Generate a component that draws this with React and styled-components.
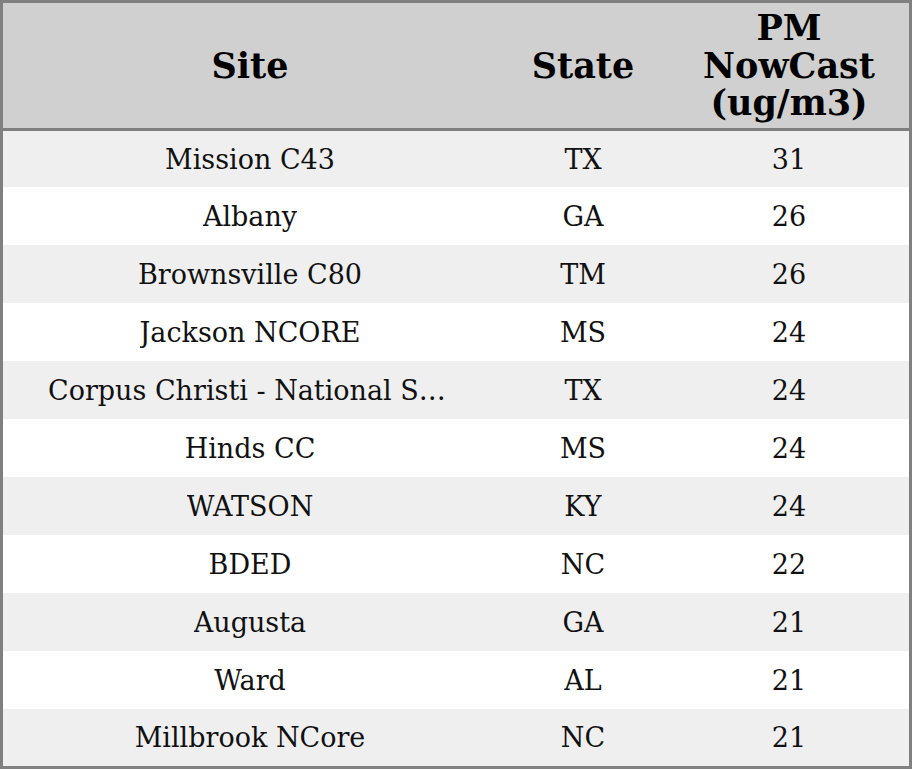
import React from "react";
import styled, { createGlobalStyle } from "styled-components";

const GlobalStyle = createGlobalStyle`
  html, body {
    margin: 0;
    padding: 0;
    background: #ffffff;
  }
  body {
    font-family: "DejaVu Serif", "Liberation Serif", serif;
  }
`;

const Table = styled.div`
  box-sizing: border-box;
  width: 912px;
  height: 769px;
  border: 3px solid #808080;
  display: flex;
  flex-direction: column;
  background: #ffffff;
  overflow: hidden;
`;

const HeaderRow = styled.div`
  display: grid;
  grid-template-columns: 494px 172px 240px;
  height: 125px;
  background: #d0d0d0;
  border-bottom: 3px solid #808080;
  flex-shrink: 0;
`;

const HeaderCell = styled.div`
  display: flex;
  align-items: center;
  justify-content: center;
  text-align: center;
  font-weight: 700;
  font-size: 35px;
  line-height: 37.5px;
  color: #000;
  padding: 0 4px;
`;

const Body = styled.div`
  flex: 1;
  display: flex;
  flex-direction: column;
`;

const Row = styled.div`
  flex: 0 0 58px;
  display: grid;
  grid-template-columns: 494px 172px 240px;
  background: ${(p) => (p.$odd ? "#efefef" : "#ffffff")};
  &:first-child {
    flex-basis: 56px;
  }
  &:last-child {
    flex: 1 1 auto;
  }
`;

const Cell = styled.div`
  display: flex;
  align-items: center;
  justify-content: center;
  font-size: 27px;
  color: #111;
  padding: 0 ${(p) => (p.$wide ? "45px" : "8px")};
  min-width: 0;
`;

const CellText = styled.span`
  white-space: nowrap;
  overflow: hidden;
  text-overflow: ellipsis;
  max-width: 100%;
`;

const rows = [
  ["Mission C43", "TX", 31],
  ["Albany", "GA", 26],
  ["Brownsville C80", "TM", 26],
  ["Jackson NCORE", "MS", 24],
  ["Corpus Christi - National Seashore", "TX", 24],
  ["Hinds CC", "MS", 24],
  ["WATSON", "KY", 24],
  ["BDED", "NC", 22],
  ["Augusta", "GA", 21],
  ["Ward", "AL", 21],
  ["Millbrook NCore", "NC", 21],
];

const App = () => {
  return (
    <>
      <GlobalStyle />
      <Table>
        <HeaderRow>
          <HeaderCell>Site</HeaderCell>
          <HeaderCell>State</HeaderCell>
          <HeaderCell>
            PM
            <br />
            NowCast
            <br />
            (ug/m3)
          </HeaderCell>
        </HeaderRow>
        <Body>
          {rows.map(([site, state, value], i) => (
            <Row key={site} $odd={i % 2 === 0}>
              <Cell $wide>
                <CellText>{site}</CellText>
              </Cell>
              <Cell>
                <CellText>{state}</CellText>
              </Cell>
              <Cell>
                <CellText>{value}</CellText>
              </Cell>
            </Row>
          ))}
        </Body>
      </Table>
    </>
  );
};

export default App;
